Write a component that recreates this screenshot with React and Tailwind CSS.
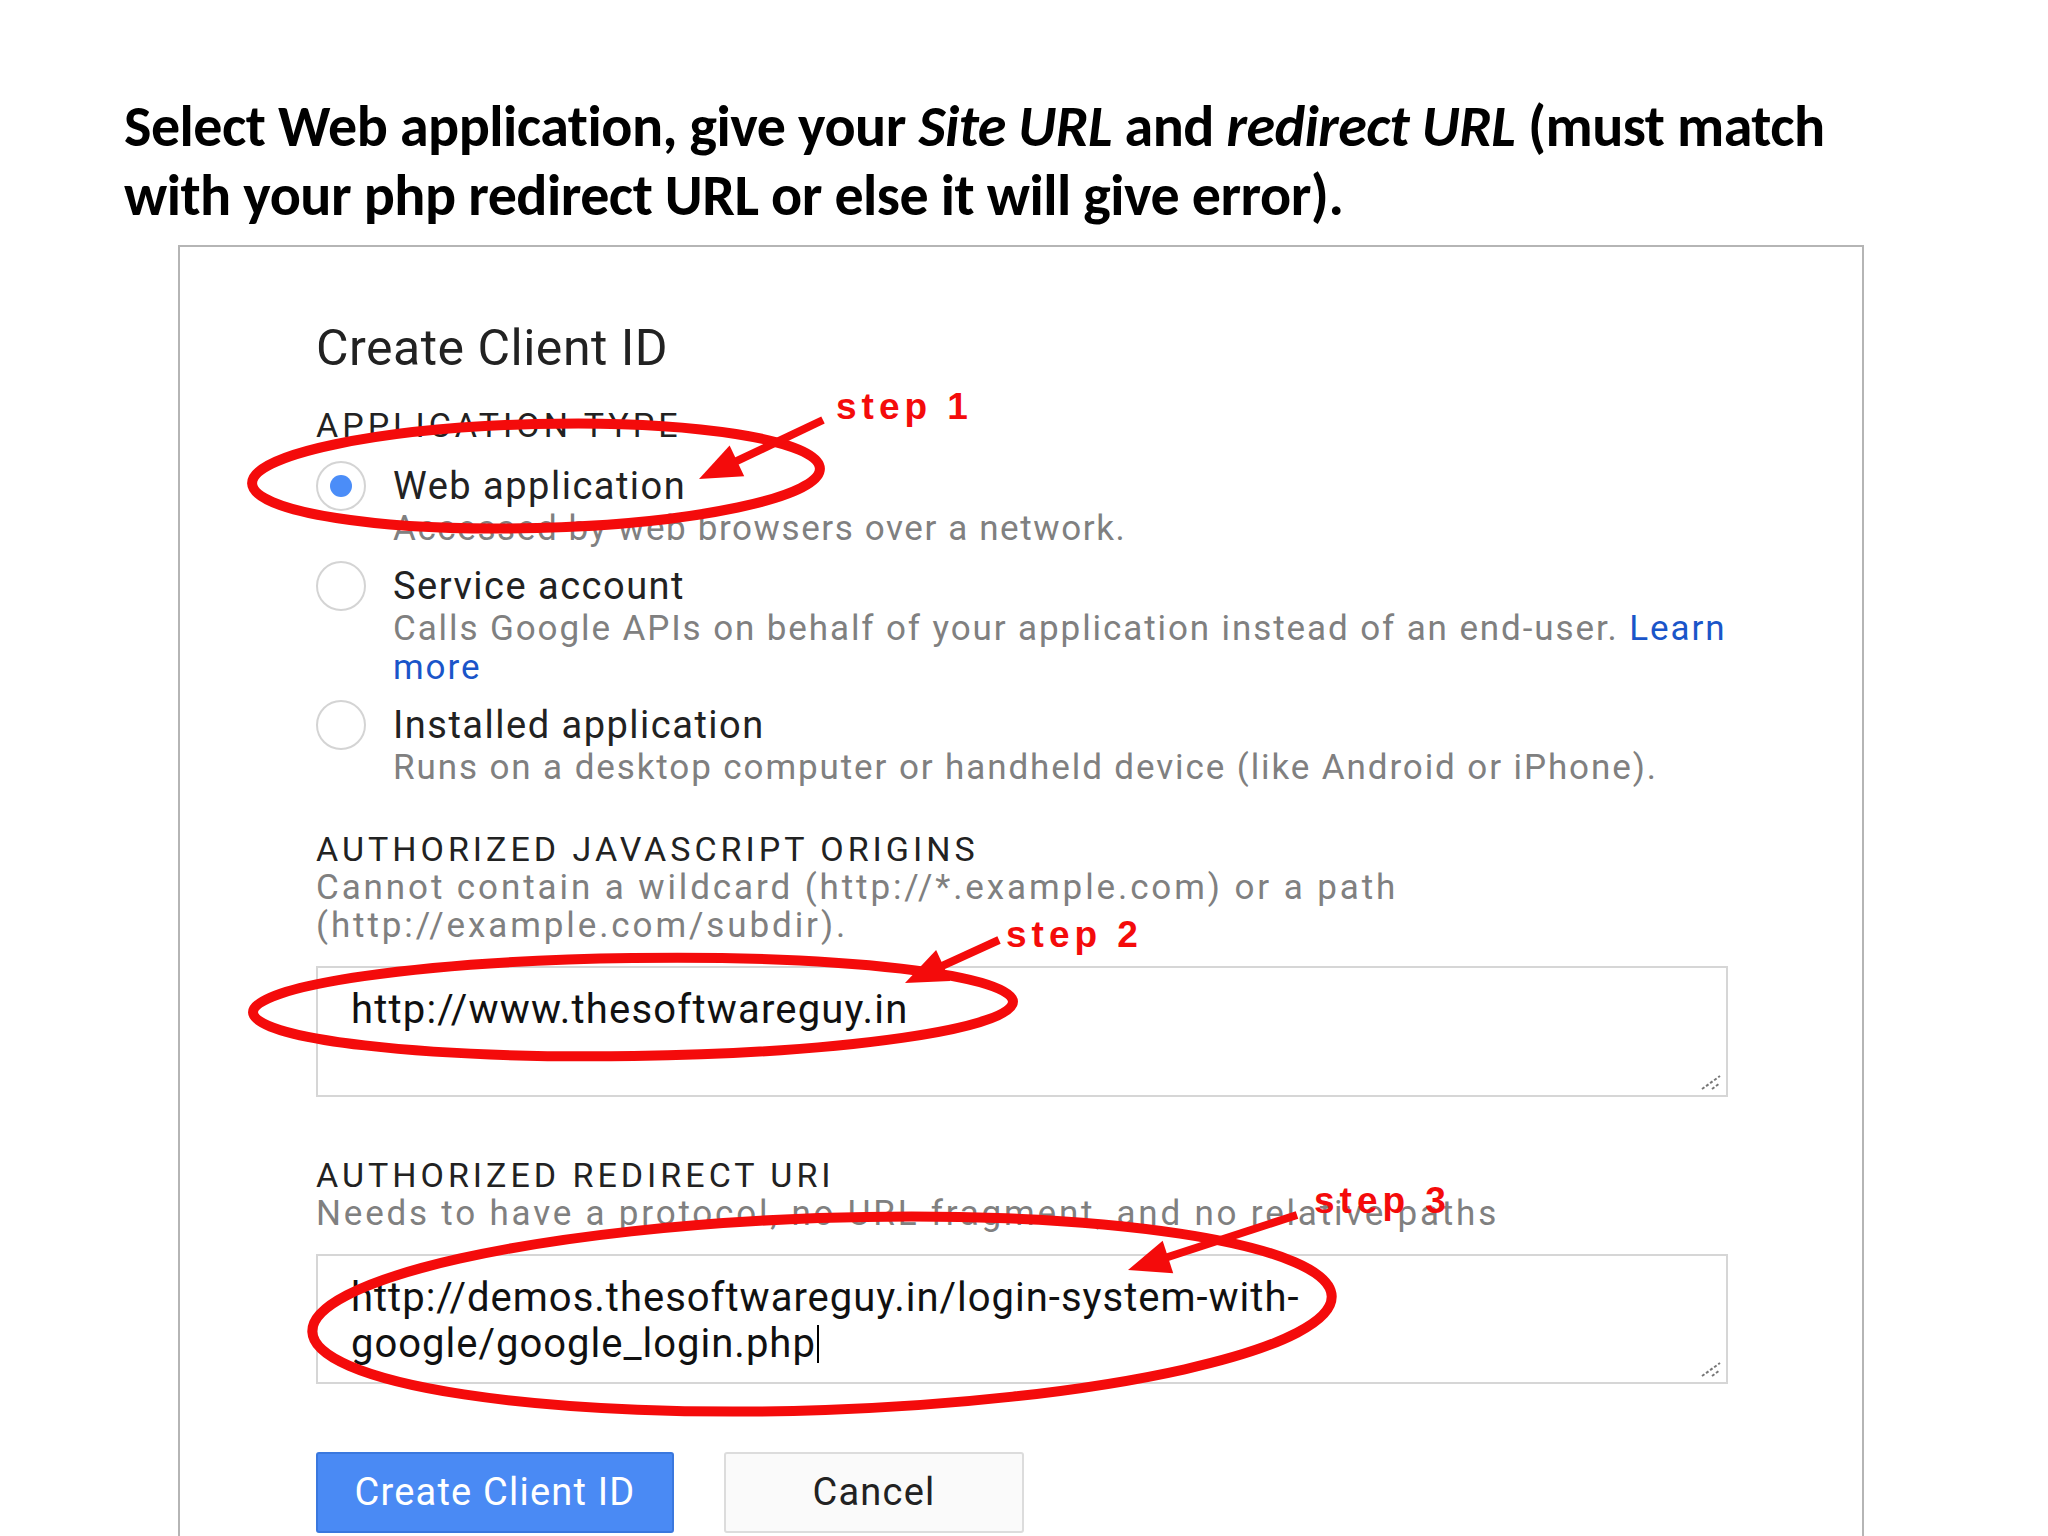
const RED = '#f40b0b';

function Arrow({ x1, y1, x2, y2 }) {
  // shaft plus filled head pointing at (x2, y2)
  const dx = x2 - x1;
  const dy = y2 - y1;
  const len = Math.hypot(dx, dy);
  const ux = dx / len;
  const uy = dy / len;
  const head = 42;
  const half = 17;
  const bx = x2 - ux * head;
  const by = y2 - uy * head;
  const pts = `${x2},${y2} ${bx - uy * half},${by + ux * half} ${bx + uy * half},${by - ux * half}`;
  return (
    <g>
      <line x1={x1} y1={y1} x2={bx + ux * 4} y2={by + uy * 4} stroke={RED} strokeWidth="8" />
      <polygon points={pts} fill={RED} />
    </g>
  );
}

function Radio({ checked }) {
  return (
    <span className="-mt-[3px] flex h-[50px] w-[50px] shrink-0 items-center justify-center rounded-full border-2 border-[#d4d4d4] bg-white">
      {checked && <span className="h-[22px] w-[22px] rounded-full bg-[#4b8df8]" />}
    </span>
  );
}

function Option({ checked, title, children }) {
  return (
    <div className="flex items-start gap-[27px]">
      <Radio checked={checked} />
      <div>
        <div className="text-[38px] leading-[45px] tracking-[1.5px] text-[#222]">{title}</div>
        <div className="text-[35px] leading-[39px] tracking-[1.9px] text-[#808080]">{children}</div>
      </div>
    </div>
  );
}

function Grip() {
  return (
    <svg className="absolute bottom-[4px] right-[4px]" width="22" height="18" viewBox="0 0 22 18">
      <line x1="2" y1="16" x2="20" y2="3" stroke="#777" strokeWidth="2" strokeDasharray="3 2" />
      <line x1="12" y1="16" x2="20" y2="10" stroke="#777" strokeWidth="2" strokeDasharray="3 2" />
    </svg>
  );
}

export default function App() {
  return (
    <div className="relative h-[1536px] w-[2048px] overflow-hidden bg-white font-['Roboto','Liberation_Sans',sans-serif]">
      <h1 className="pl-[124px] pt-[92px] font-['Carlito','Open_Sans',sans-serif] text-[58px] font-bold leading-[69px] tracking-[-0.5px] text-black">
        Select Web application, give your <i>Site URL</i> and <i>redirect URL</i> (must match
        <br />
        with your php redirect URL or else it will give error).
      </h1>

      <div className="ml-[178px] mt-[15px] h-[1400px] w-[1686px] border-x-2 border-t-2 border-[#b5b5b5] pl-[136px] pt-[73px]">
        <h2 className="text-[50px] leading-[56px] tracking-[0.5px] text-[#222]">Create Client ID</h2>

        <div className="mt-[29px] text-[34px] leading-[40px] tracking-[4px] text-[#222]">APPLICATION TYPE</div>

        <div className="mt-[19px] flex flex-col gap-[16px]">
          <Option checked title="Web application">
            <span className="tracking-[1.6px]">Accessed by web browsers over a network.</span>
          </Option>
          <Option title="Service account">
            Calls Google APIs on behalf of your application instead of an end-user.{' '}
            <span className="text-[#1a55c9]">Learn</span>
            <br />
            <span className="text-[#1a55c9]">more</span>
          </Option>
          <Option title="Installed application">
            Runs on a desktop computer or handheld device (like Android or iPhone).
          </Option>
        </div>

        <div className="mt-[42px] text-[34px] leading-[40px] tracking-[4px] text-[#222]">AUTHORIZED JAVASCRIPT ORIGINS</div>
        <div className="text-[35px] leading-[38px] tracking-[2.9px] text-[#808080]">
          Cannot contain a wildcard (http://*.example.com) or a path
          <br />
          (http://example.com/subdir).
        </div>

        <div className="relative mt-[21px] h-[131px] w-[1412px] border-2 border-[#d6d6d6] pl-[33px] pt-[20px]">
          <div className="text-[40px] leading-[44px] tracking-[1.2px] text-[#111]">http://www.thesoftwareguy.in</div>
          <Grip />
        </div>

        <div className="mt-[58px] text-[34px] leading-[40px] tracking-[4px] text-[#222]">AUTHORIZED REDIRECT URI</div>
        <div className="text-[35px] leading-[38px] tracking-[2.8px] text-[#808080]">
          Needs to have a protocol, no URL fragment, and no relative paths
        </div>

        <div className="relative mt-[21px] h-[130px] w-[1412px] border-2 border-[#d6d6d6] pl-[33px] pt-[20px]">
          <div className="text-[40px] leading-[43px] tracking-[1px] text-[#111]">
            http://demos.thesoftwareguy.in/login-system-with-
            <br />
            google/google_login.php<span className="ml-[1px] inline-block h-[38px] w-[2px] translate-y-[6px] bg-black" />
          </div>
          <Grip />
        </div>

        <div className="mt-[68px] flex gap-[50px]">
          <button className="h-[81px] w-[358px] rounded-[3px] border-2 border-[#3a78de] bg-[#4a8af4] text-[38px] tracking-[1.2px] text-white">
            Create Client ID
          </button>
          <button className="h-[81px] w-[300px] rounded-[3px] border-2 border-[#dcdcdc] bg-[#fafafa] text-[38px] tracking-[1.2px] text-[#222]">
            Cancel
          </button>
        </div>
      </div>

      <svg className="pointer-events-none absolute left-0 top-0" width="2048" height="1536" viewBox="0 0 2048 1536">
        <g fill="none" stroke={RED} strokeWidth="10">
          <ellipse cx="536" cy="476" rx="284" ry="52" transform="rotate(-1.5 536 476)" />
          <ellipse cx="633" cy="1007" rx="380" ry="49" transform="rotate(-0.8 633 1007)" />
          <ellipse cx="822" cy="1314" rx="510" ry="96" transform="rotate(-2 822 1314)" />
        </g>
        <Arrow x1={823} y1={420} x2={699} y2={479} />
        <Arrow x1={999} y1={940} x2={905} y2={983} />
        <Arrow x1={1297} y1={1215} x2={1128} y2={1270} />
        <g fill={RED} fontFamily="'Liberation Sans', Arial, sans-serif" fontWeight="700" fontSize="37" letterSpacing="5">
          <text x="836" y="419">step 1</text>
          <text x="1006" y="947">step 2</text>
          <text x="1314" y="1213">step 3</text>
        </g>
      </svg>
    </div>
  );
}
